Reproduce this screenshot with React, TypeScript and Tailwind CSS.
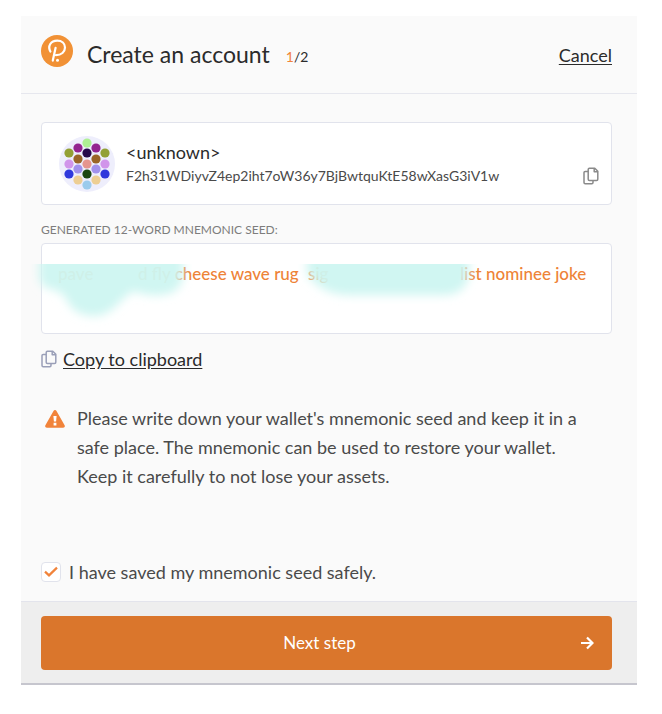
import { useState } from "react";

type Dot = [number, number, string];

const identiconDots: Dot[] = [
  [28, 7, "#aef094"],
  [19, 12, "#93248f"],
  [37, 12, "#93248f"],
  [10, 17, "#93a035"],
  [28, 17, "#26094a"],
  [46, 17, "#93a035"],
  [19, 23, "#9a6527"],
  [37, 23, "#9a6527"],
  [10, 28, "#d195ea"],
  [28, 28, "#e5958f"],
  [46, 28, "#d195ea"],
  [19, 33, "#a291ec"],
  [37, 33, "#a291ec"],
  [10, 38, "#2f38dc"],
  [28, 38, "#1c4710"],
  [46, 38, "#2f38dc"],
  [19, 44, "#edce93"],
  [37, 44, "#edce93"],
  [28, 49, "#9bcbec"],
];

function Identicon() {
  return (
    <svg viewBox="0 0 56 56" className="size-14 shrink-0" aria-hidden="true">
      <circle cx="28" cy="28" r="28" fill="#eeeefc" />
      {identiconDots.map(([x, y, fill]) => (
        <circle key={`${x}-${y}`} cx={x} cy={y} r="4.6" fill={fill} />
      ))}
    </svg>
  );
}

function Logo() {
  return (
    <svg viewBox="0 0 32 32" className="-mt-2 size-8 shrink-0" aria-hidden="true">
      <circle cx="16" cy="16" r="16" fill="#f19135" />
      <g fill="none" stroke="#fff" strokeWidth="2.2" strokeLinecap="round" strokeLinejoin="round">
        <path d="M9.4 16.6C6.4 11 9.8 5.6 16.2 5.6c4.6 0 7.8 2.9 7.8 7 0 4.4-3.7 7.5-9 7.6" />
        <path d="M14.6 12.8 11.8 25.6" />
      </g>
      <circle cx="16.5" cy="25.2" r="1.5" fill="#fff" />
    </svg>
  );
}

function CopyIcon() {
  return (
    <svg
      viewBox="0 0 16 18"
      className="h-[18px] w-4 shrink-0"
      fill="none"
      stroke="currentColor"
      strokeWidth="1.5"
      strokeLinejoin="round"
      aria-hidden="true"
    >
      <path d="M6.4 1.2h5.4L14.8 4.2v8a1.2 1.2 0 0 1-1.2 1.2H6.4a1.2 1.2 0 0 1-1.2-1.2V2.4a1.2 1.2 0 0 1 1.2-1.2Z" />
      <path d="M11.2 1.2v3.6h3.6" />
      <path d="M5.2 4.4H2.2A1.2 1.2 0 0 0 1 5.6v10a1.2 1.2 0 0 0 1.2 1.2h6.6a1.2 1.2 0 0 0 1.2-1.2v-2.2" />
    </svg>
  );
}

function WarningIcon() {
  return (
    <svg viewBox="0 0 20 18" className="mt-1.5 h-[18px] w-5 shrink-0" aria-hidden="true">
      <path
        d="M8.5.9a1.7 1.7 0 0 1 3 0l8.1 14.3c.7 1.2-.1 2.6-1.5 2.6H1.9c-1.4 0-2.2-1.4-1.5-2.6Z"
        fill="#f1833a"
      />
      <path d="M8.4 6h3.2l-.5 5.6H8.9ZM8.6 12.8h2.8v2.6H8.6Z" fill="#fff" />
    </svg>
  );
}

function Smudges() {
  return (
    <div className="pointer-events-none absolute top-5 right-0 -left-[13px] h-20 overflow-hidden">
      <svg width="580" height="80" aria-hidden="true">
        <defs>
          <filter id="soft" x="-20%" y="-40%" width="140%" height="180%">
            <feGaussianBlur stdDeviation="5" />
          </filter>
        </defs>
        <g fill="#cdf5f1" fillOpacity="0.95" filter="url(#soft)">
          <path d="M10-14H154V14Q150 30 132 31Q116 32 104 27Q94 34 87 42Q76 53 62 52Q46 50 40 40Q36 30 26 26Q10 24 10 12Z" />
          <path d="M278-14H440V12Q436 30 416 31H318Q292 30 278 10Z" />
        </g>
      </svg>
    </div>
  );
}

export default function App() {
  const [saved, setSaved] = useState(true);

  return (
    <div className="min-h-screen bg-white pt-4 pr-[25px] pl-[21px] font-[Lato,sans-serif] text-lg text-[#4a4a4a]">
      <main className="border-b-2 border-[#c6c6ce] bg-[#fafafa]">
        <header className="flex h-[78px] items-center border-b border-[#e6e7ee] px-5 pr-[25px] text-[#2b2b2b]">
          <Logo />
          <h1 className="ml-3.5 text-[23px]">Create an account</h1>
          <span className="mt-1 ml-4 text-sm">
            <span className="text-[#f1833a]">1</span>/2
          </span>
          <a href="#cancel" className="ml-auto underline underline-offset-2">
            Cancel
          </a>
        </header>

        <div className="px-5 pt-7 pr-[25px] pb-[15px]">
          <section className="flex h-[83px] items-center rounded border border-[#e1e3ec] bg-white pr-3 pl-[17px]">
            <Identicon />
            <div className="ml-[11px] min-w-0 flex-1">
              <p className="leading-6 text-[#2b2b2b]">&lt;unknown&gt;</p>
              <p className="text-sm leading-6">F2h31WDiyvZ4ep2iht7oW36y7BjBwtquKtE58wXasG3iV1w</p>
            </div>
            <button type="button" aria-label="Copy address" className="mt-6 text-[#8a8a8a]">
              <CopyIcon />
            </button>
          </section>

          <h2 className="mt-4 text-xs leading-[18px] text-[#7d7d7d]">
            GENERATED 12-WORD MNEMONIC SEED:
          </h2>
          <div className="relative mt-1 h-[91px] rounded border border-[#e1e3ec] bg-white px-4 pt-4 text-[#ee8337]">
            <p className="flex text-[17px] leading-7 font-medium whitespace-nowrap">
              <span className="w-20">pave</span>
              <span className="w-[170px]">d fly cheese wave rug</span>
              <span className="w-[152px]">sig</span>
              <span>list nominee joke</span>
            </p>
            <Smudges />
          </div>

          <button type="button" className="mt-3 flex items-center gap-1.5 text-[#9a9fb8]">
            <CopyIcon />
            <span className="leading-[26px] text-[#2b2b2b] underline underline-offset-2">
              Copy to clipboard
            </span>
          </button>

          <div className="mt-8 flex gap-3 pl-1">
            <WarningIcon />
            <p className="leading-[29px]">
              Please write down your wallet's mnemonic seed and keep it in a safe place. The mnemonic
              can be used to restore your wallet. <br />
              Keep it carefully to not lose your assets.
            </p>
          </div>

          <label className="mt-[67px] flex items-center gap-2 leading-7">
            <span className="grid size-5 place-items-center">
              <input
                type="checkbox"
                checked={saved}
                onChange={(e) => setSaved(e.target.checked)}
                className="peer col-start-1 row-start-1 size-5 appearance-none rounded border border-[#e1e3ec] bg-white"
              />
              <svg
                viewBox="0 0 14 12"
                className="pointer-events-none invisible col-start-1 row-start-1 h-3 w-3.5 peer-checked:visible"
                fill="none"
                stroke="#f1833a"
                strokeWidth="2.2"
                aria-hidden="true"
              >
                <path d="M1 5.6 5 9.4 13 1.6" />
              </svg>
            </span>
            I have saved my mnemonic seed safely.
          </label>
        </div>

        <footer className="border-t border-[#e3e4ec] bg-[#eee] px-5 pt-3.5 pr-[25px] pb-[13px]">
          <button
            type="button"
            className="flex h-[54px] w-full items-center rounded bg-[#da762c] px-[18px] text-[17px] text-white"
          >
            <span className="flex-1 text-center">Next step</span>
            <svg
              viewBox="0 0 14 14"
              className="size-3.5"
              fill="none"
              stroke="currentColor"
              strokeWidth="2.2"
              aria-hidden="true"
            >
              <path d="M1 7h11M7 1.5 12.5 7 7 12.5" />
            </svg>
          </button>
        </footer>
      </main>
    </div>
  );
}
